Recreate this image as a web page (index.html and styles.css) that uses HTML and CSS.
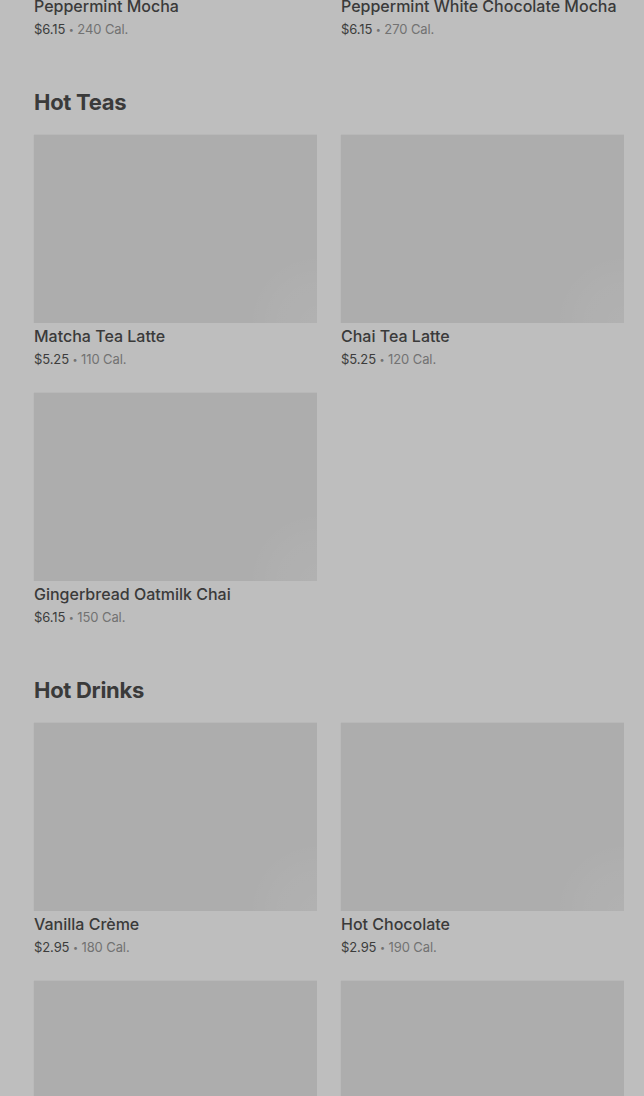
FILE: index.html
```html
<!DOCTYPE html>
<html lang="en">
<head>
<meta charset="utf-8">
<title>Menu</title>
<link rel="stylesheet" href="styles.css">
</head>
<body>
<main class="menu">
  <section class="section section-first">
    <div class="grid">
      <article class="card">
        <div class="thumb"></div>
        <h3 class="title">Peppermint Mocha</h3>
        <p class="meta"><span class="price">$6.15</span> <span class="dot">•</span> 240 Cal.</p>
      </article>
      <article class="card">
        <div class="thumb"></div>
        <h3 class="title">Peppermint White Chocolate Mocha</h3>
        <p class="meta"><span class="price">$6.15</span> <span class="dot">•</span> 270 Cal.</p>
      </article>
    </div>
  </section>

  <section class="section">
    <h2 class="heading">Hot Teas</h2>
    <div class="grid">
      <article class="card">
        <div class="thumb"></div>
        <h3 class="title">Matcha Tea Latte</h3>
        <p class="meta"><span class="price">$5.25</span> <span class="dot">•</span> 110 Cal.</p>
      </article>
      <article class="card">
        <div class="thumb"></div>
        <h3 class="title">Chai Tea Latte</h3>
        <p class="meta"><span class="price">$5.25</span> <span class="dot">•</span> 120 Cal.</p>
      </article>
      <article class="card">
        <div class="thumb"></div>
        <h3 class="title">Gingerbread Oatmilk Chai</h3>
        <p class="meta"><span class="price">$6.15</span> <span class="dot">•</span> 150 Cal.</p>
      </article>
    </div>
  </section>

  <section class="section">
    <h2 class="heading">Hot Drinks</h2>
    <div class="grid">
      <article class="card">
        <div class="thumb"></div>
        <h3 class="title">Vanilla Crème</h3>
        <p class="meta"><span class="price">$2.95</span> <span class="dot">•</span> 180 Cal.</p>
      </article>
      <article class="card">
        <div class="thumb"></div>
        <h3 class="title">Hot Chocolate</h3>
        <p class="meta"><span class="price">$2.95</span> <span class="dot">•</span> 190 Cal.</p>
      </article>
      <article class="card">
        <div class="thumb"></div>
        <h3 class="title">Caramel Apple Spice</h3>
        <p class="meta"><span class="price">$4.95</span> <span class="dot">•</span> 340 Cal.</p>
      </article>
      <article class="card">
        <div class="thumb"></div>
        <h3 class="title">Steamed Milk</h3>
        <p class="meta"><span class="price">$2.45</span> <span class="dot">•</span> 130 Cal.</p>
      </article>
    </div>
  </section>
</main>
</body>
</html>
```

FILE: styles.css
```css
html, body {
  margin: 0;
  padding: 0;
  background: #bebebe;
  height: 1096px;
  overflow: hidden;
}

body {
  font-family: Inter, "Noto Sans", "Liberation Sans", sans-serif;
  color: #3a3a3a;
}

.menu {
  display: flex;
  flex-direction: column;
  gap: 49px;
  padding: 0 20px 0 34px;
  margin-top: -195px;
}

.section {
  display: flex;
  flex-direction: column;
  gap: 19px;
}

.heading {
  margin: 0;
  font-size: 22px;
  line-height: 28px;
  font-weight: 700;
  letter-spacing: -0.3px;
  color: #3a3a3a;
}

.grid {
  display: grid;
  grid-template-columns: 283px 283px;
  column-gap: 24px;
  row-gap: 24px;
}

.card {
  display: flex;
  flex-direction: column;
  height: 234px;
}

.thumb {
  flex: 0 0 188px;
  background:
    radial-gradient(circle at 100% 100%, rgba(255,255,255,0.05) 0, rgba(255,255,255,0.03) 40px, rgba(255,255,255,0) 70px),
    #adadad;
  box-shadow: 0 -1px 0 rgba(0,0,0,0.03), -1px 0 0 rgba(0,0,0,0.02);
}

.title {
  margin: 1px 0 0;
  font-size: 16px;
  line-height: 24px;
  font-weight: 500;
  color: #3a3a3a;
  white-space: nowrap;
}

.meta {
  margin: 0;
  padding-top: 1px;
  font-size: 13px;
  line-height: 20px;
  font-weight: 400;
  letter-spacing: -0.1px;
  color: #727272;
}

.price {
  color: #3c3c3c;
}

.dot {
  font-size: 9px;
  line-height: 0;
  vertical-align: 1px;
}
```
